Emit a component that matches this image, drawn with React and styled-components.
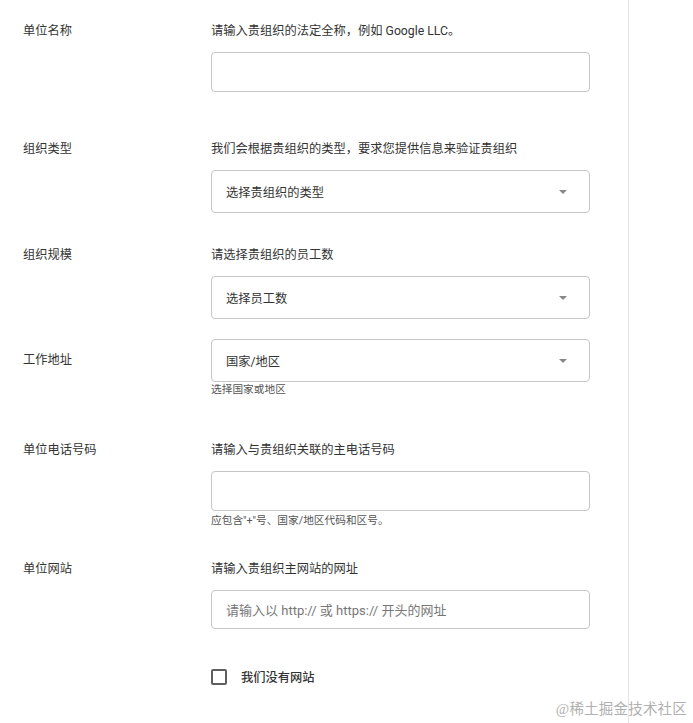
import React from "react";
import styled, { createGlobalStyle } from "styled-components";

const Global = createGlobalStyle`
  html, body { margin: 0; padding: 0; background: #fff; }
  body { font-family: Roboto, "Noto Sans CJK SC", sans-serif; color: #333; }
  * { box-sizing: border-box; }
`;

const Page = styled.div`
  position: relative;
  width: 693px;
  height: 723px;
  overflow: hidden;
  display: flex;
`;

const Main = styled.div`
  width: 629px;
  border-right: 1px solid #e3e3e3;
  padding-left: 23px;
  display: flex;
  flex-direction: column;
`;

const Section = styled.div`
  display: grid;
  grid-template-columns: 188px 379px;
  margin-top: ${(p) => p.$top}px;
`;

const Label = styled.div`
  font-size: 12.25px;
  line-height: 20px;
  color: #333;
  padding-top: ${(p) => (p.$pad || 0) + 2}px;
`;

const Field = styled.div`
  display: flex;
  flex-direction: column;
`;

const Desc = styled.div`
  font-size: 12.25px;
  line-height: 20px;
  color: #333;
  padding-top: 2px;
  margin-bottom: 11px;
`;

const Box = styled.div`
  height: ${(p) => p.$h}px;
  border: 1px solid #c6c6c6;
  border-radius: 4px;
  display: flex;
  align-items: center;
  justify-content: space-between;
  padding: 0 22px 0 14px;
  font-size: ${(p) => (p.$placeholder ? 13 : 12.25)}px;
  color: ${(p) => (p.$placeholder ? "#777" : "#333")};
`;

const Arrow = styled.span`
  width: 0;
  height: 0;
  border-left: 4px solid transparent;
  border-right: 4px solid transparent;
  border-top: 4px solid #888;
`;

const Helper = styled.div`
  font-size: 10.7px;
  line-height: 14px;
  color: #555;
  margin-top: ${(p) => p.$top}px;
`;

const CheckRow = styled.label`
  display: flex;
  align-items: center;
  gap: 14px;
  margin-top: 39px;
  margin-left: 188px;
  font-size: 12.25px;
  font-weight: 500;
  color: #333;
`;

const Check = styled.span`
  width: 16px;
  height: 16px;
  border: 2px solid #5f5f5f;
  border-radius: 2px;
`;

const Watermark = styled.div`
  position: absolute;
  right: 6px;
  bottom: 5px;
  font-family: "Liberation Serif", "Noto Sans CJK SC", serif;
  font-size: 14.5px;
  color: #b0b0b0;
  letter-spacing: 0.2px;
`;

export default function App() {
  return (
    <Page>
      <Global />
      <Main>
        <Section $top={19}>
          <Label>单位名称</Label>
          <Field>
            <Desc>请输入贵组织的法定全称，例如 Google LLC。</Desc>
            <Box $h={40} />
          </Field>
        </Section>

        <Section $top={45}>
          <Label>组织类型</Label>
          <Field>
            <Desc>我们会根据贵组织的类型，要求您提供信息来验证贵组织</Desc>
            <Box $h={43}>
              选择贵组织的类型
              <Arrow />
            </Box>
          </Field>
        </Section>

        <Section $top={30}>
          <Label>组织规模</Label>
          <Field>
            <Desc>请选择贵组织的员工数</Desc>
            <Box $h={43}>
              选择员工数
              <Arrow />
            </Box>
          </Field>
        </Section>

        <Section $top={20}>
          <Label $pad={9}>工作地址</Label>
          <Field>
            <Box $h={43}>
              国家/地区
              <Arrow />
            </Box>
            <Helper $top={1}>选择国家或地区</Helper>
          </Field>
        </Section>

        <Section $top={41}>
          <Label>单位电话号码</Label>
          <Field>
            <Desc>请输入与贵组织关联的主电话号码</Desc>
            <Box $h={40} />
            <Helper $top={3}>应包含"+"号、国家/地区代码和区号。</Helper>
          </Field>
        </Section>

        <Section $top={29}>
          <Label>单位网站</Label>
          <Field>
            <Desc>请输入贵组织主网站的网址</Desc>
            <Box $h={39} $placeholder>
              请输入以 http:// 或 https:// 开头的网址
            </Box>
          </Field>
        </Section>

        <CheckRow>
          <Check />
          我们没有网站
        </CheckRow>
      </Main>
      <Watermark>@稀土掘金技术社区</Watermark>
    </Page>
  );
}
